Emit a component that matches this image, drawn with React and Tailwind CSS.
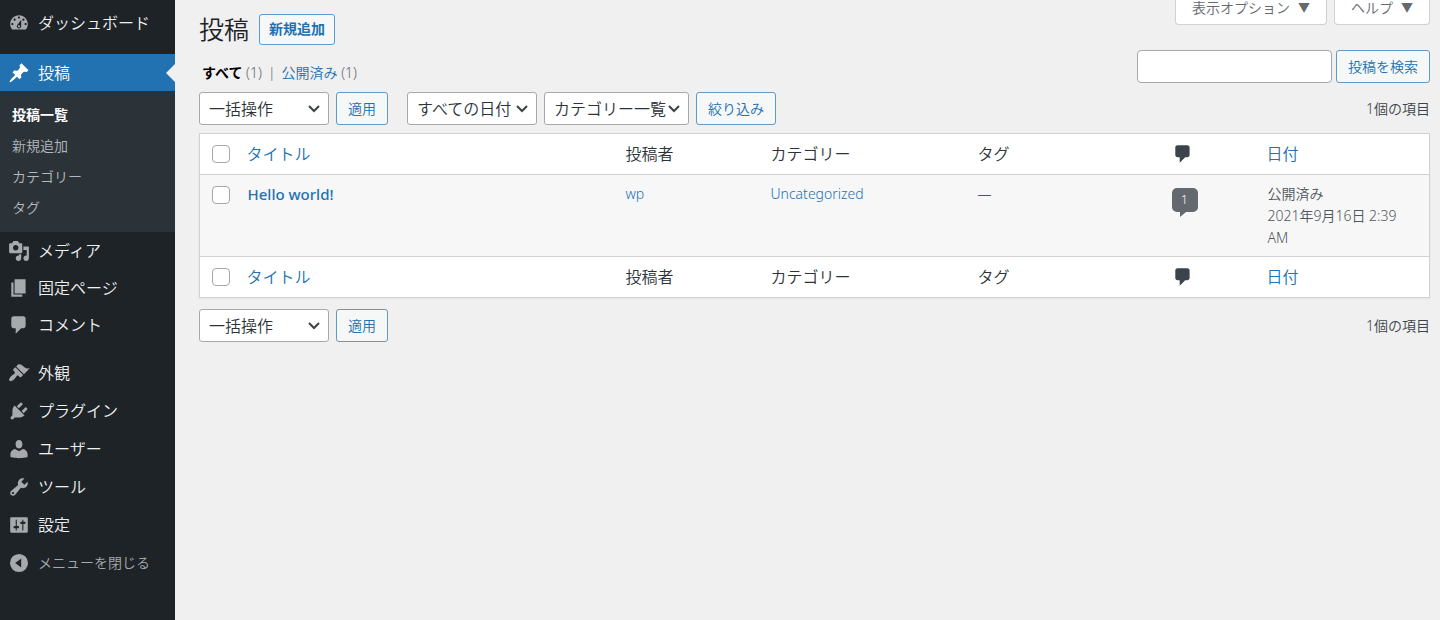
import React, { useState } from "react";

const icons = {
  dashboard:
    "M3.76 16h12.48c1.1-1.37 1.76-3.11 1.76-5 0-4.42-3.58-8-8-8s-8 3.58-8 8c0 1.89.66 3.63 1.76 5zM10 4c.55 0 1 .45 1 1s-.45 1-1 1-1-.45-1-1 .45-1 1-1zM6 6c.55 0 1 .45 1 1s-.45 1-1 1-1-.45-1-1 .45-1 1-1zm8 0c.55 0 1 .45 1 1s-.45 1-1 1-1-.45-1-1 .45-1 1-1zm-5.37 5.55L12 7v6c0 1.1-.9 2-2 2s-2-.9-2-2c0-.57.24-1.08.63-1.45zM4 10c.55 0 1 .45 1 1s-.45 1-1 1-1-.45-1-1 .45-1 1-1zm12 0c.55 0 1 .45 1 1s-.45 1-1 1-1-.45-1-1 .45-1 1-1zm-5 3c0-.55-.45-1-1-1s-1 .45-1 1 .45 1 1 1 1-.45 1-1z",
  post: "M10.44 3.02l1.82-1.82 6.36 6.35-1.83 1.82c-1.05-.68-2.48-.57-3.41.36l-.75.75c-.92.93-1.04 2.35-.35 3.41l-1.83 1.82-2.41-2.41-2.8 2.79c-.42.42-3.38 2.71-3.8 2.29s1.86-3.39 2.28-3.81l2.79-2.79L4.1 9.36l1.83-1.82c1.05.69 2.48.57 3.4-.36l.75-.75c.93-.92 1.05-2.35.36-3.41z",
  media:
    "M13 11V4c0-.55-.45-1-1-1h-1.67L9 1H5L3.67 3H2c-.55 0-1 .45-1 1v7c0 .55.45 1 1 1h10c.55 0 1-.45 1-1zM7 4.5c1.38 0 2.5 1.12 2.5 2.5S8.38 9.5 7 9.5 4.5 8.38 4.5 7 5.62 4.5 7 4.5zM14 6h5v10.5c0 1.38-1.12 2.5-2.5 2.5S14 17.88 14 16.5s1.12-2.5 2.5-2.5c.17 0 .34.02.5.05V9h-3V6zm-4 8.05V13h2v3.5c0 1.38-1.12 2.5-2.5 2.5S7 17.88 7 16.5 8.12 14 9.5 14c.17 0 .34.02.5.05z",
  page: "M6 15V2h10v13H6zm-1 1h8v2H3V5h2v11z",
  comment:
    "M5 2h9c1.1 0 2 .9 2 2v7c0 1.1-.9 2-2 2h-2l-5 5v-5H5c-1.1 0-2-.9-2-2V4c0-1.1.9-2 2-2z",
  appearance:
    "M14.48 11.06L7.41 3.99l1.5-1.5c.5-.56 2.3-.47 3.51.32 1.21.8 1.43 1.28 2.91 2.1 1.18.64 2.45 1.26 4.45.85zm-.71.71L6.7 4.7 4.93 6.47c-.39.39-.39 1.02 0 1.41l1.06 1.06c.39.39.39 1.03 0 1.42-.6.6-1.43 1.11-2.21 1.69-.35.26-.7.53-1.01.84C1.43 14.23.4 16.08 1.4 17.07c.99 1 2.84-.03 4.18-1.36.31-.31.58-.66.85-1.02.57-.78 1.08-1.61 1.69-2.21.39-.39 1.02-.39 1.41 0l1.06 1.06c.39.39 1.02.39 1.41 0z",
  plugins:
    "M13.11 4.36L9.87 7.6 8 5.73l3.24-3.24c.35-.34 1.05-.2 1.56.32.52.51.66 1.21.31 1.55zm-8 1.77l.91-1.12 9.01 9.01-1.19.84c-.71.71-2.63 1.16-3.82 1.16H6.14L4.9 17.26c-.59.59-1.54.59-2.12 0-.59-.58-.59-1.53 0-2.12l1.24-1.24v-3.88c0-1.13.4-3.19 1.09-3.89zm7.26 3.97l3.24-3.24c.34-.35 1.04-.21 1.55.31.52.51.66 1.21.31 1.55l-3.24 3.25z",
  users:
    "M10 9.6c-2.3 0-3-2-3.1-3.6C6.8 3.5 8 1.9 10 1.9s3.2 1.600 3.100 4.100c-.1 1.600-.8 3.600-3.100 3.600zM6.500 9.900L10 12l3.500-2.100c2.400.4 4.300 2.300 4.300 4.600v2.600c0 .5-3.600 1.200-7.800 1.200s-7.800-.7-7.800-1.200v-2.600c0-2.300 1.900-4.200 4.300-4.600z",
  tools:
    "M16.68 9.77c-1.34 1.34-3.3 1.67-4.95.99l-5.41 6.52c-.99.99-2.59.99-3.58 0s-.99-2.59 0-3.57l6.52-5.42c-.68-1.65-.35-3.61.99-4.95 1.28-1.28 3.12-1.62 4.72-1.06l-2.89 2.89 2.82 2.82 2.86-2.87c.53 1.58.18 3.39-1.08 4.65zM3.81 16.21c.4.39 1.04.39 1.43 0 .4-.4.4-1.04 0-1.43-.39-.4-1.03-.4-1.43 0-.39.39-.39 1.03 0 1.43z",
  settings:
    "M18 16V4c0-.55-.45-1-1-1H3c-.55 0-1 .45-1 1v12c0 .55.45 1 1 1h14c.55 0 1-.45 1-1zM8 11h1c.55 0 1 .45 1 1s-.45 1-1 1H8v1.5c0 .28-.22.5-.5.5s-.5-.22-.5-.5V13H6c-.55 0-1-.45-1-1s.45-1 1-1h1V5.5c0-.28.22-.5.5-.5s.5.22.5.5V11zm5-2h-1c-.55 0-1-.45-1-1s.45-1 1-1h1V5.5c0-.28.22-.5.5-.5s.5.22.5.5V7h1c.55 0 1 .45 1 1s-.45 1-1 1h-1v5.5c0 .28-.22.5-.5.5s-.5-.22-.5-.5V9z",
  collapse:
    "M10 1.8a8.2 8.2 0 1 0 0 16.4 8.2 8.2 0 0 0 0-16.4zM12 6v8L6.5 10z",
};

const Icon = ({ name, className }) => (
  <svg viewBox="0 0 20 20" className={className} aria-hidden="true">
    <path d={icons[name]} fill="currentColor" fillRule="evenodd" />
  </svg>
);

const MenuItem = ({ icon, label }) => (
  <li>
    <a href="#" className="flex h-[37px] items-center gap-2 pl-2 text-base text-[#f0f0f1]">
      <Icon name={icon} className="size-[22px] shrink-0 text-[#a7aaad]" />
      {label}
    </a>
  </li>
);

const Sidebar = () => (
  <nav className="w-[175px] shrink-0 bg-[#1d2327] pt-1">
    <ul>
      <MenuItem icon="dashboard" label="ダッシュボード" />
      <li className="mt-[13px]">
        <a
          href="#"
          className="relative flex h-[37px] items-center gap-2 bg-[#2271b1] pl-2 text-base text-white"
        >
          <Icon name="post" className="size-[22px] shrink-0" />
          投稿
          <span className="absolute top-1/2 right-0 -translate-y-1/2 border-y-[9px] border-r-[9px] border-y-transparent border-r-[#f0f0f1]" />
        </a>
        <ul className="bg-[#2c3338] pt-2 pb-[9px] pl-3 text-sm text-[#b4b9be]">
          <li>
            <a href="#" className="flex h-[31px] items-center font-bold text-white">
              投稿一覧
            </a>
          </li>
          <li>
            <a href="#" className="flex h-[31px] items-center">新規追加</a>
          </li>
          <li>
            <a href="#" className="flex h-[31px] items-center">カテゴリー</a>
          </li>
          <li>
            <a href="#" className="flex h-[31px] items-center">タグ</a>
          </li>
        </ul>
      </li>
      <MenuItem icon="media" label="メディア" />
      <MenuItem icon="page" label="固定ページ" />
      <MenuItem icon="comment" label="コメント" />
    </ul>
    <ul className="mt-[11px] flex flex-col gap-px">
      <MenuItem icon="appearance" label="外観" />
      <MenuItem icon="plugins" label="プラグイン" />
      <MenuItem icon="users" label="ユーザー" />
      <MenuItem icon="tools" label="ツール" />
      <MenuItem icon="settings" label="設定" />
      <li>
        <button
          type="button"
          className="flex h-[37px] items-center gap-2 pl-2 text-sm text-[#a7aaad]"
        >
          <Icon name="collapse" className="size-[22px] shrink-0" />
          メニューを閉じる
        </button>
      </li>
    </ul>
  </nav>
);

const Button = ({ children, ...props }) => (
  <button
    className="h-[33px] rounded-[3px] border border-[#5b9bd0] bg-[#f6f7f7] px-[11px] text-sm text-[#2271b1]"
    {...props}
  >
    {children}
  </button>
);

const Select = ({ label, options, className }) => (
  <div className={`relative ${className}`}>
    <select
      aria-label={label}
      className="h-[33px] w-full appearance-none rounded-[3px] border border-[#a5a8ac] bg-white pl-[9px] text-base leading-none text-[#2c3338]"
    >
      {options.map((option) => (
        <option key={option}>{option}</option>
      ))}
    </select>
    <svg
      viewBox="0 0 12 8"
      className="pointer-events-none absolute top-[13px] right-[9px] h-2 w-3"
      aria-hidden="true"
    >
      <path d="M1 1l5 5 5-5" fill="none" stroke="#3c434a" strokeWidth="2" />
    </svg>
  </div>
);

const bulkOptions = ["一括操作", "編集", "ゴミ箱へ移動"];

const BulkActions = () => (
  <div className="flex gap-[7px]">
    <Select label="一括操作を選択" options={bulkOptions} className="w-[130px]" />
    <Button type="button">適用</Button>
  </div>
);

const Checkbox = ({ label, ...props }) => (
  <input
    type="checkbox"
    aria-label={label}
    className="block size-[18px] appearance-none rounded-[4px] border border-[#a5a8ac] bg-white checked:bg-[#2271b1]"
    {...props}
  />
);

const HeadingRow = ({ checked, onChange }) => (
  <tr className="h-[41px] bg-white text-left text-base text-[#2c3338]">
    <th className="w-[37px] pl-3">
      <Checkbox label="すべて選択" checked={checked} onChange={onChange} />
    </th>
    <th className="px-[10px] font-[350]">
      <a href="#" className="text-[#2271b1]">タイトル</a>
    </th>
    <th className="w-[145px] px-[10px] font-[350]">投稿者</th>
    <th className="w-[207px] px-[10px] font-[350]">カテゴリー</th>
    <th className="w-[196px] px-[10px] font-[350]">タグ</th>
    <th className="w-[93px] px-2" aria-label="コメント">
      <Icon name="comment" className="size-[22px] text-[#3c434a]" />
    </th>
    <th className="w-[173px] px-[10px] font-[350]">
      <a href="#" className="text-[#2271b1]">日付</a>
    </th>
  </tr>
);

const PostsTable = () => {
  const [checked, setChecked] = useState(false);
  const toggle = (e) => setChecked(e.target.checked);

  return (
    <table className="mt-2 w-full table-fixed border-collapse border border-[#d0d1d4] shadow-xs">
      <thead className="border-b border-[#d0d1d4]">
        <HeadingRow checked={checked} onChange={toggle} />
      </thead>
      <tbody>
        <tr className="h-[82px] bg-[#f7f7f7] align-top text-sm text-[#50575e]">
          <td className="pt-[11px] pl-3">
            <Checkbox label="Hello world! を選択" checked={checked} onChange={toggle} />
          </td>
          <td className="px-[11px] pt-2">
            <a href="#" className="text-[15px] leading-[22px] font-medium text-[#2271b1]">
              Hello world!
            </a>
          </td>
          <td className="px-[10px] pt-2 leading-[22px]">
            <a href="#" className="text-[#2271b1]">wp</a>
          </td>
          <td className="px-[10px] pt-2 leading-[22px]">
            <a href="#" className="text-[#2271b1]">Uncategorized</a>
          </td>
          <td className="px-[10px] pt-2 leading-[22px]">—</td>
          <td className="px-2 pt-[13px]">
            <a href="#" className="flex w-[26px] flex-col">
              <span className="flex h-6 items-center justify-center rounded-[5px] bg-[#646970] text-xs text-white">
                1
              </span>
              <span className="ml-2 self-start border-t-[5px] border-r-[6px] border-t-[#646970] border-r-transparent" />
            </a>
          </td>
          <td className="px-[11px] pt-2 leading-[22px]">
            公開済み
            <br />
            2021年9月16日 2:39 AM
          </td>
        </tr>
      </tbody>
      <tfoot className="border-t border-[#d0d1d4]">
        <HeadingRow checked={checked} onChange={toggle} />
      </tfoot>
    </table>
  );
};

const App = () => {
  return (
    <div className="flex min-h-screen bg-[#f0f0f1] font-['Noto_Sans','Noto_Sans_CJK_JP',sans-serif] text-sm font-[350] text-[#3c434a]">
      <Sidebar />
      <main className="min-w-0 flex-1 pr-[10px] pl-6">
        <div className="flex items-start justify-between">
          <div className="flex h-[50px] items-center gap-[10px] pt-2">
            <h1 className="text-[25px] leading-none text-[#1d2327]">投稿</h1>
            <a
              href="#"
              className="flex h-[31px] items-center rounded-[3px] border border-[#5b9bd0] bg-[#f6f7f7] px-[9px] font-bold text-[#2271b1]"
            >
              新規追加
            </a>
          </div>
          <div className="flex gap-[7px] text-[#646970]">
            <button
              type="button"
              className="flex h-[25px] items-center gap-2 rounded-b-[4px] border border-t-0 border-[#d0d1d4] bg-white px-4 pb-2 leading-none"
            >
              表示オプション <span className="text-xs leading-none">▼</span>
            </button>
            <button
              type="button"
              className="flex h-[25px] items-center gap-2 rounded-b-[4px] border border-t-0 border-[#d0d1d4] bg-white px-4 pb-2 leading-none"
            >
              ヘルプ <span className="text-xs leading-none">▼</span>
            </button>
          </div>
        </div>

        <div className="flex items-end justify-between">
          <ul className="flex gap-1 pl-[3px] leading-[20px] text-[#646970]">
            <li>
              <a href="#" className="font-bold text-black">すべて</a> (1)
            </li>
            <li className="px-[2px]">|</li>
            <li>
              <a href="#" className="text-[#2271b1]">公開済み</a> (1)
            </li>
          </ul>
          <form className="flex gap-1" onSubmit={(e) => e.preventDefault()}>
            <input
              type="search"
              aria-label="投稿を検索"
              className="h-[33px] w-[195px] rounded-[4px] border border-[#a5a8ac] bg-white px-2"
            />
            <Button type="submit">投稿を検索</Button>
          </form>
        </div>

        <div className="mt-[9px] flex items-center justify-between">
          <div className="flex gap-[19px]">
            <BulkActions />
            <div className="flex gap-[7px]">
              <Select
                label="日付で絞り込む"
                options={["すべての日付", "2021年9月"]}
                className="w-[130px]"
              />
              <Select
                label="カテゴリーで絞り込む"
                options={["カテゴリー一覧", "Uncategorized"]}
                className="w-[145px]"
              />
              <Button type="button">絞り込み</Button>
            </div>
          </div>
          <span>1個の項目</span>
        </div>

        <PostsTable />

        <div className="mt-[11px] flex items-center justify-between">
          <BulkActions />
          <span>1個の項目</span>
        </div>
      </main>
    </div>
  );
};

export default App;
